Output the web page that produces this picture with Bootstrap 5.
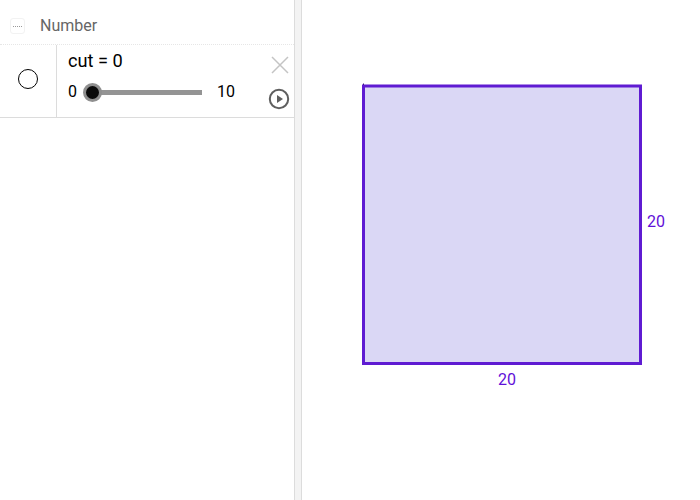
<!DOCTYPE html>
<html>
<head>
  <title>Number</title>
  <link href="https://cdn.jsdelivr.net/npm/bootstrap@5.3.0/dist/css/bootstrap.min.css" rel="stylesheet">
  <style>
    html, body { height: 100%; overflow: hidden; }
    body { font-family: Roboto, "Liberation Sans", sans-serif; background: #fff; color: #000; }
    .app-shell { height: 500px; }
    .algebra-pane { width: 295px; border-right: 1px solid #dcdcdc; }
    .pane-divider { width: 7px; background: #f3f3f3; border-right: 1px solid #dcdcdc; }
    .graphics-pane { position: relative; }
    .group-head { height: 45px; padding: 8px 0 0 10px; border-bottom: 1px dotted #e6e6e6; color: #666; font-size: 16px; gap: 15px; }
    .collapse-box { width: 15px; height: 16px; border: 1px solid #f2f2f2; border-radius: 3px; }
    .collapse-box::after { content: ""; width: 9px; border-top: 1px dotted #999; }
    .item-row { height: 73px; border-bottom: 1px solid #dcdcdc; }
    .marble-cell { width: 57px; border-right: 1px solid #dcdcdc; }
    .marble { width: 20px; height: 20px; margin-top: -4px; border: 1px solid #000; border-radius: 50%; }
    .item-body { padding: 5px 0 0 11px; }
    .item-formula { font-size: 18.2px; line-height: 22px; }
    .slider-line { font-size: 16px; line-height: 20px; margin-top: 10px; }
    .slider-track { width: 110px; height: 5px; margin: 0 15px; background: #949494; position: relative; }
    .slider-knob { position: absolute; left: -9px; top: -7px; width: 19px; height: 19px; border-radius: 50%; background: #0a0a0a; border: 3px solid #8f8f8f; }
    .row-tools { width: 32px; padding: 11px 0 0 2px; gap: 14px; }
    .close-icon { margin-left: 1px; }
    .shape-canvas { display: block; }
    .side-label { position: absolute; color: #5f10d8; font-size: 16px; line-height: 20px; }
    .label-bottom { left: 196px; top: 370px; }
    .label-right { left: 345px; top: 212px; }
  </style>
</head>
<body>
  <div class="app-shell d-flex">
    <!-- Algebra view -->
    <div class="algebra-pane flex-shrink-0">
      <div class="group-head d-flex align-items-center">
        <span class="collapse-box d-flex align-items-center justify-content-center"></span>
        <span>Number</span>
      </div>
      <div class="item-row d-flex">
        <div class="marble-cell d-flex align-items-center justify-content-center">
          <div class="marble"></div>
        </div>
        <div class="item-body flex-grow-1">
          <div class="item-formula">cut = 0</div>
          <div class="slider-line d-flex align-items-center">
            <span>0</span>
            <div class="slider-track"><div class="slider-knob"></div></div>
            <span>10</span>
          </div>
        </div>
        <div class="row-tools d-flex flex-column align-items-center flex-shrink-0">
          <svg class="close-icon" width="18" height="18" viewBox="0 0 18 18"><path d="M1 1 L17 17 M17 1 L1 17" stroke="#c4c4c4" stroke-width="1.5" fill="none"/></svg>
          <svg width="22" height="22" viewBox="0 0 22 22"><circle cx="11" cy="11" r="9.2" stroke="#5f5f5f" stroke-width="2" fill="none"/><path d="M9 7 L15 11 L9 15 Z" fill="#5f5f5f"/></svg>
        </div>
      </div>
    </div>
    <div class="pane-divider flex-shrink-0"></div>
    <!-- Graphics view -->
    <div class="graphics-pane flex-grow-1">
      <svg class="shape-canvas" width="398" height="500">
        <rect x="61.5" y="86" width="277" height="277.5" fill="#dad7f5" stroke="#5f1bd2" stroke-width="3"/>
        <path d="M61.5 83.5 V85" stroke="#3a1a80" stroke-width="1"/>
      </svg>
      <span class="side-label label-bottom">20</span>
      <span class="side-label label-right">20</span>
    </div>
  </div>
  <script src="https://cdn.jsdelivr.net/npm/bootstrap@5.3.0/dist/js/bootstrap.bundle.min.js"></script>
</body>
</html>
